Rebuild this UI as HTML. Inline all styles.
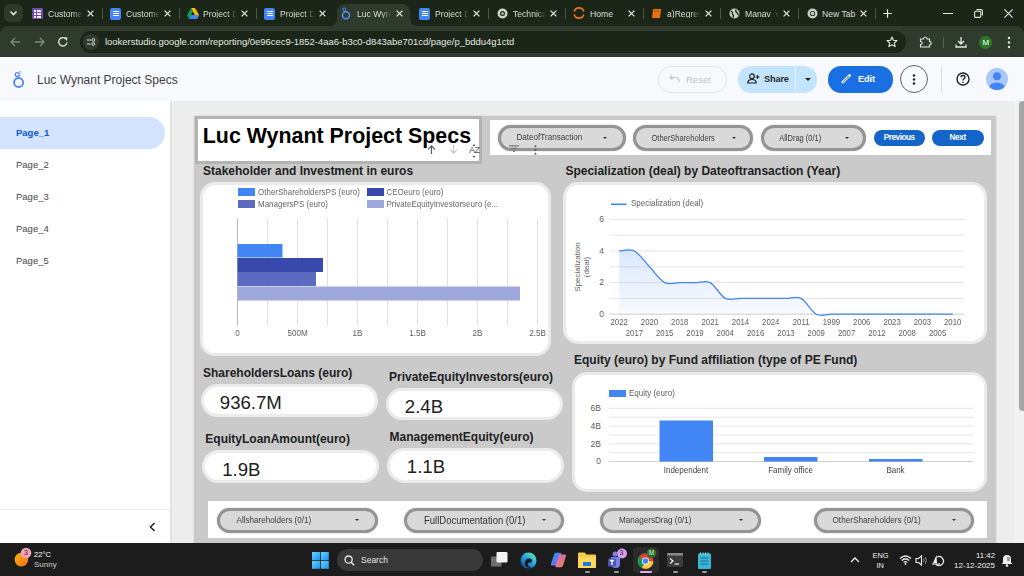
<!DOCTYPE html><html><head><meta charset="utf-8"><style>
*{margin:0;padding:0;box-sizing:border-box}
html,body{width:1024px;height:576px;overflow:hidden;background:#ececec;font-family:"Liberation Sans",sans-serif}
.a{position:absolute}
.t{position:absolute;white-space:nowrap;line-height:1}
.tabt{position:absolute;top:9.5px;font-size:8.6px;color:#cdd4c9;line-height:1;white-space:nowrap;overflow:hidden}
.sep{position:absolute;top:8px;width:1px;height:11px;background:#4b5849}
.pg{position:absolute;left:16px;font-size:9.5px;color:#474747;line-height:1}
.card{position:absolute;background:#fff;border:3px solid #ebebeb;border-radius:15px}
.stitle{position:absolute;font-size:12px;font-weight:bold;color:#212121;line-height:1;white-space:nowrap}
.pill{position:absolute;background:#fff;border:3px solid #ececec;border-radius:18px}
.val{position:absolute;font-size:18.6px;color:#212121;line-height:1;white-space:nowrap}
.fp{position:absolute;background:#d9d9d9;box-shadow:0 0 1.5px rgba(0,0,0,0.3);border:3px solid #949494;border-radius:14px}
.fpt{position:absolute;font-size:8px;color:#444;line-height:1;white-space:nowrap;transform:scaleY(1.12)}
.sy{transform:scaleY(1.12)}
.arr{position:absolute;width:0;height:0;border-left:2px solid transparent;border-right:2px solid transparent;border-top:2px solid #333}
svg{position:absolute;overflow:visible}
</style></head><body>
<div class="a" style="left:0;top:0;width:1024px;height:34px;background:#1b2619"></div>
<div class="a" style="left:4px;top:4px;width:19px;height:18px;background:#2d3a2c;border-radius:6px"></div>
<svg style="left:9px;top:9px" width="9" height="8" viewBox="0 0 9 8"><path d="M1.5 2.5 L4.5 5.5 L7.5 2.5" stroke="#e3e8df" stroke-width="1.6" fill="none"/></svg>
<div class="a" style="left:337px;top:4px;width:73px;height:23px;background:#2e3b2d;border-radius:8px 8px 0 0"></div>
<svg style="left:329px;top:18px" width="8" height="9" viewBox="0 0 8 9"><path d="M0 8 Q8 8 8 0 L8 9 L0 9Z" fill="#2e3b2d"/></svg>
<svg style="left:410px;top:18px" width="8" height="9" viewBox="0 0 8 9"><path d="M8 8 Q0 8 0 0 L0 9 L8 9Z" fill="#2e3b2d"/></svg>
<div class="a" style="left:32px;top:8px;width:11px;height:11px;background:#7248b9;border-radius:1px"></div>
<div class="a" style="left:34px;top:10px;width:1.5px;height:1.5px;background:#fff"></div><div class="a" style="left:36.5px;top:10px;width:4.5px;height:1.5px;background:#fff"></div>
<div class="a" style="left:34px;top:13px;width:1.5px;height:1.5px;background:#fff"></div><div class="a" style="left:36.5px;top:13px;width:4.5px;height:1.5px;background:#fff"></div>
<div class="a" style="left:34px;top:16px;width:1.5px;height:1.5px;background:#fff"></div><div class="a" style="left:36.5px;top:16px;width:4.5px;height:1.5px;background:#fff"></div>
<div class="tabt" style="left:48px;width:35px;color:#d9dfd5;-webkit-mask-image:linear-gradient(to right,#000 70%,transparent);">Custome</div>
<svg style="left:86.5px;top:10.0px" width="7" height="7" viewBox="0 0 7 7"><path d="M0.6 0.6 L6.4 6.4 M6.4 0.6 L0.6 6.4" stroke="#dfe5db" stroke-width="1.3"/></svg>
<div class="sep" style="left:102.3px"></div>
<div class="a" style="left:110px;top:8px;width:11px;height:12px;background:#4285f4;border-radius:2px"></div><div class="a" style="left:113px;top:11px;width:6px;height:1px;background:#fff"></div><div class="a" style="left:113px;top:13px;width:6px;height:1px;background:#fff"></div><div class="a" style="left:113px;top:15px;width:6px;height:1px;background:#fff"></div>
<div class="tabt" style="left:126px;width:34px;color:#d9dfd5;-webkit-mask-image:linear-gradient(to right,#000 70%,transparent);">Custome</div>
<svg style="left:163.5px;top:10.0px" width="7" height="7" viewBox="0 0 7 7"><path d="M0.6 0.6 L6.4 6.4 M6.4 0.6 L0.6 6.4" stroke="#dfe5db" stroke-width="1.3"/></svg>
<div class="sep" style="left:179.3px"></div>
<svg style="left:187px;top:8px" width="12" height="11" viewBox="0 0 12 11"><path d="M4 0 L8 0 L12 7 L10 11 Z" fill="#fbbc04"/><path d="M4 0 L0 7 L2 11 L6 3.5Z" fill="#0f9d58"/><path d="M2 11 L10 11 L12 7 L4 7Z" fill="#4285f4"/></svg>
<div class="tabt" style="left:203px;width:34px;color:#d9dfd5;-webkit-mask-image:linear-gradient(to right,#000 70%,transparent);">Project D</div>
<svg style="left:240.5px;top:10.0px" width="7" height="7" viewBox="0 0 7 7"><path d="M0.6 0.6 L6.4 6.4 M6.4 0.6 L0.6 6.4" stroke="#dfe5db" stroke-width="1.3"/></svg>
<div class="sep" style="left:256.3px"></div>
<div class="a" style="left:264px;top:8px;width:11px;height:12px;background:#4285f4;border-radius:2px"></div><div class="a" style="left:267px;top:11px;width:6px;height:1px;background:#fff"></div><div class="a" style="left:267px;top:13px;width:6px;height:1px;background:#fff"></div><div class="a" style="left:267px;top:15px;width:6px;height:1px;background:#fff"></div>
<div class="tabt" style="left:280px;width:35px;color:#d9dfd5;-webkit-mask-image:linear-gradient(to right,#000 70%,transparent);">Project D</div>
<svg style="left:318.5px;top:10.0px" width="7" height="7" viewBox="0 0 7 7"><path d="M0.6 0.6 L6.4 6.4 M6.4 0.6 L0.6 6.4" stroke="#dfe5db" stroke-width="1.3"/></svg>
<svg style="left:341px;top:7px" width="10" height="13" viewBox="0 0 10 13"><circle cx="5" cy="8.3" r="3.5" stroke="#4f8ff7" stroke-width="1.6" fill="none"/><circle cx="3.3" cy="2.6" r="1.6" stroke="#4f8ff7" stroke-width="1" fill="none"/></svg>
<div class="tabt" style="left:357px;width:35px;color:#d9dfd5;-webkit-mask-image:linear-gradient(to right,#000 70%,transparent);">Luc Wyn</div>
<svg style="left:395.5px;top:10.0px" width="7" height="7" viewBox="0 0 7 7"><path d="M0.6 0.6 L6.4 6.4 M6.4 0.6 L0.6 6.4" stroke="#dfe5db" stroke-width="1.3"/></svg>
<div class="a" style="left:419px;top:8px;width:11px;height:12px;background:#4285f4;border-radius:2px"></div><div class="a" style="left:422px;top:11px;width:6px;height:1px;background:#fff"></div><div class="a" style="left:422px;top:13px;width:6px;height:1px;background:#fff"></div><div class="a" style="left:422px;top:15px;width:6px;height:1px;background:#fff"></div>
<div class="tabt" style="left:435px;width:34px;color:#d9dfd5;-webkit-mask-image:linear-gradient(to right,#000 70%,transparent);">Project D</div>
<svg style="left:472.5px;top:10.0px" width="7" height="7" viewBox="0 0 7 7"><path d="M0.6 0.6 L6.4 6.4 M6.4 0.6 L0.6 6.4" stroke="#dfe5db" stroke-width="1.3"/></svg>
<div class="sep" style="left:488.3px"></div>
<svg style="left:497px;top:8px" width="11" height="11" viewBox="0 0 11 11"><circle cx="5.5" cy="5.5" r="5" fill="#cfd5cb"/><circle cx="5.5" cy="5.5" r="2.5" fill="#1b2619"/><circle cx="5.5" cy="5.5" r="1.2" fill="#cfd5cb"/></svg>
<div class="tabt" style="left:513px;width:33px;color:#d9dfd5;-webkit-mask-image:linear-gradient(to right,#000 70%,transparent);">Technica</div>
<svg style="left:549.5px;top:10.0px" width="7" height="7" viewBox="0 0 7 7"><path d="M0.6 0.6 L6.4 6.4 M6.4 0.6 L0.6 6.4" stroke="#dfe5db" stroke-width="1.3"/></svg>
<div class="sep" style="left:565.3px"></div>
<svg style="left:573px;top:7px" width="12" height="12" viewBox="0 0 12 12"><path d="M1.2 4.5 A5 5 0 0 1 10.8 4.5" stroke="#e8731c" stroke-width="1.6" fill="none"/><path d="M1.2 7.5 A5 5 0 0 0 10.8 7.5" stroke="#e8731c" stroke-width="1.6" fill="none"/></svg>
<div class="tabt" style="left:590px;width:34px;color:#d9dfd5;">Home</div>
<svg style="left:627.5px;top:10.0px" width="7" height="7" viewBox="0 0 7 7"><path d="M0.6 0.6 L6.4 6.4 M6.4 0.6 L0.6 6.4" stroke="#dfe5db" stroke-width="1.3"/></svg>
<div class="sep" style="left:643.3px"></div>
<svg style="left:651px;top:8px" width="11" height="11" viewBox="0 0 11 11"><path d="M2 1 L10 1 L9 10 L1 10Z" fill="#e8730f"/><path d="M3 3 L8 3" stroke="#7a3a00" stroke-width="0.8"/></svg>
<div class="tabt" style="left:667px;width:34px;color:#d9dfd5;-webkit-mask-image:linear-gradient(to right,#000 70%,transparent);">a)Regres</div>
<svg style="left:704.5px;top:10.0px" width="7" height="7" viewBox="0 0 7 7"><path d="M0.6 0.6 L6.4 6.4 M6.4 0.6 L0.6 6.4" stroke="#dfe5db" stroke-width="1.3"/></svg>
<div class="sep" style="left:720.3px"></div>
<svg style="left:729px;top:8px" width="11" height="11" viewBox="0 0 11 11"><circle cx="5.5" cy="5.5" r="5" fill="#c8cec4"/><path d="M2 3 Q4 4 3.5 6 Q5 7 4 9.5 M7 1.5 Q6 4 8.5 5 Q9 7 10 7" stroke="#1b2619" stroke-width="1.3" fill="none"/></svg>
<div class="tabt" style="left:745px;width:34px;color:#d9dfd5;-webkit-mask-image:linear-gradient(to right,#000 70%,transparent);">Manav_v</div>
<svg style="left:782.5px;top:10.0px" width="7" height="7" viewBox="0 0 7 7"><path d="M0.6 0.6 L6.4 6.4 M6.4 0.6 L0.6 6.4" stroke="#dfe5db" stroke-width="1.3"/></svg>
<div class="sep" style="left:798.3px"></div>
<svg style="left:807px;top:8px" width="11" height="11" viewBox="0 0 11 11"><circle cx="5.5" cy="5.5" r="5" fill="#c8cec4"/><circle cx="5.5" cy="5.5" r="2.6" fill="#1b2619"/><circle cx="5.5" cy="5.5" r="1.8" fill="#c8cec4"/></svg>
<div class="tabt" style="left:822px;width:34px;color:#d9dfd5;">New Tab</div>
<svg style="left:859.5px;top:10.0px" width="7" height="7" viewBox="0 0 7 7"><path d="M0.6 0.6 L6.4 6.4 M6.4 0.6 L0.6 6.4" stroke="#dfe5db" stroke-width="1.3"/></svg>
<div class="sep" style="left:875.3px"></div>
<svg style="left:883px;top:9px" width="9" height="9" viewBox="0 0 9 9"><path d="M4.5 0.3 V8.7 M0.3 4.5 H8.7" stroke="#e3e8df" stroke-width="1.2"/></svg>
<div class="a" style="left:943px;top:13px;width:10px;height:1px;background:#e3e8df"></div>
<svg style="left:973.5px;top:9px" width="9" height="9" viewBox="0 0 9 9"><rect x="0.6" y="2.2" width="6.2" height="6.2" rx="1.2" stroke="#e3e8df" stroke-width="1.1" fill="none"/><path d="M2.5 0.6 H7 Q8.4 0.6 8.4 2 V6.5" stroke="#e3e8df" stroke-width="1.1" fill="none"/></svg>
<svg style="left:1004px;top:9px" width="9" height="9" viewBox="0 0 9 9"><path d="M0.4 0.4 L8.6 8.6 M8.6 0.4 L0.4 8.6" stroke="#e3e8df" stroke-width="1.1"/></svg>
<div class="a" style="left:0;top:26px;width:1024px;height:31px;background:#2e3b2d;border-radius:8px 8px 0 0"></div>
<div class="a" style="left:337px;top:20px;width:73px;height:8px;background:#2e3b2d"></div>
<svg style="left:10px;top:37px" width="11" height="10" viewBox="0 0 11 10"><path d="M10 5 H1.5 M5 1 L1 5 L5 9" stroke="#7f8c7c" stroke-width="1.3" fill="none"/></svg>
<svg style="left:34px;top:37px" width="11" height="10" viewBox="0 0 11 10"><path d="M1 5 H9.5 M6 1 L10 5 L6 9" stroke="#7f8c7c" stroke-width="1.3" fill="none"/></svg>
<svg style="left:57px;top:36px" width="12" height="12" viewBox="0 0 12 12"><path d="M10 6.5 A4.2 4.2 0 1 1 8.5 2.6" stroke="#d9dfd5" stroke-width="1.4" fill="none"/><path d="M6.5 1.5 L10.3 1.3 L10 5Z" fill="#d9dfd5"/></svg>
<div class="a" style="left:80px;top:31px;width:826px;height:22px;background:#1b2619;border-radius:11px"></div>
<div class="a" style="left:83px;top:34px;width:16px;height:16px;background:#2e3b2d;border-radius:8px"></div>
<svg style="left:86px;top:37px" width="10" height="10" viewBox="0 0 10 10"><path d="M1 3 H5 M1 7 H4.5" stroke="#d9dfd5" stroke-width="1.1"/><circle cx="7.3" cy="3" r="1.4" stroke="#d9dfd5" stroke-width="1" fill="none"/><circle cx="7.3" cy="7" r="1.4" stroke="#d9dfd5" stroke-width="1" fill="none"/></svg>
<div class="t" style="left:105px;top:37px;font-size:9.45px;color:#e6e9e3">lookerstudio.google.com/reporting/0e96cec9-1852-4aa6-b3c0-d843abe701cd/page/p_bddu4g1ctd</div>
<svg style="left:886px;top:36px" width="12" height="12" viewBox="0 0 12 12"><path d="M6 1 L7.4 4.3 L11 4.6 L8.3 7 L9.1 10.6 L6 8.7 L2.9 10.6 L3.7 7 L1 4.6 L4.6 4.3Z" stroke="#e3e8df" stroke-width="1.1" fill="none" stroke-linejoin="round"/></svg>
<svg style="left:919px;top:36px" width="13" height="12" viewBox="0 0 13 12"><path d="M1.5 3 H4.5 Q4.5 1 6.3 1 Q8 1 8 3 H10.5 V5.5 Q12.3 5.5 12.3 7.2 Q12.3 9 10.5 9 V11 H1.5 V8.5 Q3.2 8.5 3.2 7 Q3.2 5.5 1.5 5.5Z" stroke="#e3e8df" stroke-width="1.1" fill="none"/></svg>
<div class="a" style="left:943px;top:37px;width:1px;height:11px;background:#56624f"></div>
<svg style="left:955px;top:36px" width="12" height="12" viewBox="0 0 12 12"><path d="M6 1 V8 M3 5 L6 8 L9 5 M1 8.5 V11 H11 V8.5" stroke="#e3e8df" stroke-width="1.3" fill="none"/></svg>
<div class="a" style="left:979px;top:36px;width:13px;height:13px;background:#2b7a2a;border-radius:7px"></div>
<div class="t" style="left:982.5px;top:39px;font-size:8px;color:#fff">M</div>
<svg style="left:1007px;top:36px" width="4" height="13" viewBox="0 0 4 13"><circle cx="2" cy="2" r="1.2" fill="#e3e8df"/><circle cx="2" cy="6.5" r="1.2" fill="#e3e8df"/><circle cx="2" cy="11" r="1.2" fill="#e3e8df"/></svg>
<div class="a" style="left:0;top:57px;width:1024px;height:44px;background:#f8f9fc"></div>
<svg style="left:12px;top:70px" width="14" height="19" viewBox="0 0 14 19"><circle cx="6.6" cy="12.5" r="4.5" stroke="#4d8af0" stroke-width="1.9" fill="none"/><circle cx="5.2" cy="4.6" r="2" stroke="#4d8af0" stroke-width="1.3" fill="none"/><circle cx="7.8" cy="2.4" r="1.1" stroke="#8fb6f5" stroke-width="0.9" fill="none"/></svg>
<div class="t" style="left:37px;top:74px;font-size:12px;color:#3c4043">Luc Wynant Project Specs</div>
<div class="a" style="left:658px;top:66.3px;width:69px;height:26.3px;border:1px solid #e3e4e8;border-radius:13px"></div>
<svg style="left:669px;top:74px" width="11" height="9" viewBox="0 0 11 9"><path d="M3 1 L1 3.5 L3.5 5.5 M1.3 3.5 H6.5 Q10 3.5 10 7 V8" stroke="#c1c4ca" stroke-width="1.2" fill="none"/></svg>
<div class="t" style="left:686px;top:75.2px;font-size:9.5px;color:#c1c4ca">Reset</div>
<div class="a" style="left:738px;top:66.3px;width:79px;height:26.3px;background:#c2e5fd;border-radius:13px"></div>
<div class="a" style="left:795px;top:66px;width:1px;height:26px;background:#e8f4fd"></div>
<svg style="left:747px;top:73px" width="13" height="11" viewBox="0 0 13 11"><circle cx="5" cy="3.2" r="2.3" stroke="#1f1f1f" stroke-width="1.2" fill="none"/><path d="M0.8 10 Q0.8 6.5 5 6.5 Q9.2 6.5 9.2 10Z" stroke="#1f1f1f" stroke-width="1.2" fill="none"/><path d="M10.5 2 V6 M8.5 4 H12.5" stroke="#1f1f1f" stroke-width="1.2"/></svg>
<div class="t" style="left:764px;top:75.2px;font-size:9.2px;color:#2a2a2a;font-weight:bold;letter-spacing:-0.15px">Share</div>
<div class="arr" style="left:804.5px;top:78px;border-left-width:3px;border-right-width:3px;border-top-width:3px;border-top-color:#1f1f1f"></div>
<div class="a" style="left:828px;top:66.3px;width:65px;height:26.3px;background:#1a6fe3;border-radius:13px"></div>
<svg style="left:841px;top:73px" width="11" height="11" viewBox="0 0 11 11"><path d="M1.8 9.2 L8.6 2.4" stroke="#fff" stroke-width="2.6" stroke-linecap="round"/><path d="M2.4 8.6 L7.6 3.4" stroke="#1a6fe3" stroke-width="0.8" stroke-linecap="round"/></svg>
<div class="t" style="left:858px;top:75.2px;font-size:9.2px;color:#fff;font-weight:bold;letter-spacing:-0.1px">Edit</div>
<div class="a" style="left:900px;top:65px;width:28px;height:28px;border:1px solid #5f6368;border-radius:14px"></div>
<svg style="left:912px;top:74px" width="4" height="11" viewBox="0 0 4 11"><circle cx="2" cy="1.5" r="1.2" fill="#1f1f1f"/><circle cx="2" cy="5.5" r="1.2" fill="#1f1f1f"/><circle cx="2" cy="9.5" r="1.2" fill="#1f1f1f"/></svg>
<div class="a" style="left:941px;top:66px;width:1px;height:27px;background:#dadce0"></div>
<svg style="left:956px;top:72px" width="14" height="14" viewBox="0 0 14 14"><circle cx="7" cy="7" r="6" stroke="#1f1f1f" stroke-width="1.4" fill="none"/><path d="M5 5.3 Q5 3.5 7 3.5 Q9 3.5 9 5.2 Q9 6.3 7.8 6.9 Q7 7.3 7 8.4" stroke="#1f1f1f" stroke-width="1.3" fill="none"/><circle cx="7" cy="10.3" r="0.8" fill="#1f1f1f"/></svg>
<svg style="left:986px;top:68px" width="22" height="22" viewBox="0 0 22 22"><defs><clipPath id="av"><circle cx="11" cy="11" r="11"/></clipPath></defs><circle cx="11" cy="11" r="11" fill="#a8c7fa"/><g clip-path="url(#av)"><circle cx="11" cy="8.3" r="4" fill="#4285f4"/><ellipse cx="11" cy="20" rx="8" ry="5.5" fill="#4285f4"/></g></svg>
<div class="a" style="left:0;top:101px;width:170px;height:442px;background:#fff"></div>
<div class="a" style="left:-20px;top:117px;width:185px;height:32px;background:#d3e3fd;border-radius:16px"></div>
<div class="pg" style="top:128px;color:#0b57d0;font-weight:bold">Page_1</div>
<div class="pg" style="top:160px">Page_2</div>
<div class="pg" style="top:192px">Page_3</div>
<div class="pg" style="top:224px">Page_4</div>
<div class="pg" style="top:256px">Page_5</div>
<div class="a" style="left:0;top:509px;width:170px;height:1px;background:#e8e8e8"></div>
<svg style="left:149px;top:522px" width="7" height="10" viewBox="0 0 7 10"><path d="M5.5 1 L1.5 5 L5.5 9" stroke="#1f1f1f" stroke-width="1.5" fill="none"/></svg>
<div class="a" style="left:170px;top:101px;width:849px;height:442px;background:#ededed"></div><div class="a" style="left:170px;top:101px;width:1.5px;height:442px;background:#e2e2e2"></div>
<div class="a" style="left:1014px;top:101px;width:10px;height:442px;background:#f1f1f1"></div>
<div class="a" style="left:1019px;top:101px;width:8px;height:310px;background:#a6a6a6;border-radius:4px"></div>
<div class="a" style="left:194px;top:116px;width:801.5px;height:427px;background:#cacaca;box-shadow:0 0 1.5px rgba(0,0,0,0.15)"></div>
<div class="a" style="left:195px;top:116px;width:287px;height:48px;background:#fff;border:3px solid #b3b3b3"></div>
<div class="t" style="left:202.8px;top:126px;font-size:21.4px;font-weight:bold;color:#000">Luc Wynant Project Specs</div>
<svg style="left:427px;top:145px" width="9" height="9" viewBox="0 0 9 9"><path d="M4.5 9 V1 M1 4.3 L4.5 0.8 L8 4.3" stroke="#555" stroke-width="1.1" fill="none"/></svg>
<svg style="left:449px;top:145px" width="9" height="9" viewBox="0 0 9 9"><path d="M4.5 0 V8 M1 4.7 L4.5 8.2 L8 4.7" stroke="#c4c4c4" stroke-width="1.1" fill="none"/></svg>
<div class="t" style="left:469px;top:146.3px;font-size:9px;color:#555;letter-spacing:-0.6px">AZ</div>
<svg style="left:471.5px;top:143.5px" width="4" height="14" viewBox="0 0 4 14"><path d="M2 0 L3.5 2 H0.5Z M2 14 L3.5 12 H0.5Z" fill="#555"/></svg>
<div class="a" style="left:490px;top:120px;width:501px;height:35px;background:#fff"></div>
<div class="fp" style="left:497.5px;top:124.8px;width:128.0px;height:25.89999999999999px;border-radius:12.949999999999996px"></div>
<div class="fpt" style="left:516.5px;top:134.30px;font-size:8.1px;color:#3c3c3c">DateofTransaction</div>
<div class="arr" style="left:603px;top:136.75px"></div>
<div class="fp" style="left:632.5px;top:124.8px;width:120.79999999999995px;height:25.89999999999999px;border-radius:12.949999999999996px"></div>
<div class="fpt" style="left:651.5px;top:134.60px;font-size:7.5px;color:#3c3c3c">OtherShareholders</div>
<div class="arr" style="left:731.5px;top:136.75px"></div>
<div class="fp" style="left:760.5px;top:124.8px;width:105.79999999999995px;height:25.89999999999999px;border-radius:12.949999999999996px"></div>
<div class="fpt" style="left:779.2px;top:134.60px;font-size:7.5px;color:#3c3c3c">AllDrag (0/1)</div>
<div class="arr" style="left:844.5px;top:136.75px"></div>
<svg style="left:509px;top:145px" width="10" height="8" viewBox="0 0 10 8"><path d="M0 0.8 H10 M2 3.5 H8 M4 6.3 H6" stroke="#777" stroke-width="1.3"/></svg>
<svg style="left:534px;top:145px" width="3" height="10" viewBox="0 0 3 10"><circle cx="1.5" cy="1.3" r="1" fill="#555"/><circle cx="1.5" cy="5" r="1" fill="#555"/><circle cx="1.5" cy="8.7" r="1" fill="#555"/></svg>
<div class="a" style="left:873.5px;top:129.7px;width:51px;height:16.3px;background:#1565c8;border-radius:8px"></div>
<div class="t" style="left:883.7px;top:134.3px;font-size:8.2px;font-weight:bold;color:#fff;letter-spacing:-0.45px">Previous</div>
<div class="a" style="left:932px;top:129.7px;width:51.5px;height:16.3px;background:#1565c8;border-radius:8px"></div>
<div class="t" style="left:949.5px;top:134.3px;font-size:8.2px;font-weight:bold;color:#fff;letter-spacing:-0.3px">Next</div>
<div class="stitle" style="left:203px;top:164.5px">Stakeholder and Investment in euros</div>
<div class="stitle" style="left:565.4px;top:164.5px">Specialization (deal) by Dateoftransaction (Year)</div>
<div class="stitle" style="left:574px;top:354px">Equity (euro) by Fund affiliation (type of PE Fund)</div>
<div class="card" style="left:200px;top:182px;width:351px;height:173.5px"></div>
<div class="card" style="left:563px;top:182px;width:424px;height:161.5px"></div>
<div class="card" style="left:572px;top:372px;width:415px;height:119.5px"></div>
<div class="stitle" style="left:203px;top:366.5px">ShareholdersLoans (euro)</div>
<div class="pill" style="left:201px;top:384px;width:177px;height:33px;border-radius:16.5px"></div>
<div class="val" style="left:219.8px;top:394.3px">936.7M</div>
<div class="stitle" style="left:389px;top:370.5px">PrivateEquityInvestors(euro)</div>
<div class="pill" style="left:386px;top:388px;width:177px;height:32px;border-radius:16.0px"></div>
<div class="val" style="left:404.8px;top:397.8px">2.4B</div>
<div class="stitle" style="left:205.3px;top:432.5px">EquityLoanAmount(euro)</div>
<div class="pill" style="left:202px;top:450px;width:177px;height:33px;border-radius:16.5px"></div>
<div class="val" style="left:222.2px;top:460.7px">1.9B</div>
<div class="stitle" style="left:389.5px;top:430.5px">ManagementEquity(euro)</div>
<div class="pill" style="left:386.8px;top:447.5px;width:177.2px;height:35.5px;border-radius:17.75px"></div>
<div class="val" style="left:406.8px;top:457.8px">1.1B</div>
<div class="a" style="left:208px;top:501px;width:779px;height:37px;background:#fff"></div>
<div class="fp" style="left:217.3px;top:507.6px;width:160.7px;height:25.399999999999977px;border-radius:12.699999999999989px"></div>
<div class="fpt" style="left:236.5px;top:516.85px;font-size:8.1px;color:#3c3c3c">Allshareholders (0/1)</div>
<div class="arr" style="left:355px;top:519.3px"></div>
<div class="fp" style="left:403.6px;top:507.6px;width:160.19999999999993px;height:25.399999999999977px;border-radius:12.699999999999989px"></div>
<div class="fpt" style="left:424px;top:516.15px;font-size:9.5px;color:#333">FullDocumentation (0/1)</div>
<div class="arr" style="left:541.5px;top:519.3px"></div>
<div class="fp" style="left:600.2px;top:507.6px;width:160.79999999999995px;height:25.399999999999977px;border-radius:12.699999999999989px"></div>
<div class="fpt" style="left:619px;top:516.85px;font-size:8.1px;color:#3c3c3c">ManagersDrag (0/1)</div>
<div class="arr" style="left:738.5px;top:519.3px"></div>
<div class="fp" style="left:813.5px;top:507.6px;width:160.79999999999995px;height:25.399999999999977px;border-radius:12.699999999999989px"></div>
<div class="fpt" style="left:832.5px;top:516.80px;font-size:8.2px;color:#3c3c3c">OtherShareholders (0/1)</div>
<div class="arr" style="left:952px;top:519.3px"></div>
<div class="a" style="left:238px;top:188px;width:17px;height:8px;background:#4285f4"></div>
<div class="t sy" style="left:258px;top:188.8px;font-size:8px;color:#686868">OtherShareholdersPS (euro)</div>
<div class="a" style="left:366.5px;top:188px;width:17px;height:8px;background:#3949ab"></div>
<div class="t sy" style="left:386.5px;top:188.8px;font-size:8px;color:#686868">CEOeuro (euro)</div>
<div class="a" style="left:238px;top:200px;width:17px;height:8px;background:#5c6bc0"></div>
<div class="t sy" style="left:258px;top:200.8px;font-size:8px;color:#686868">ManagersPS (euro)</div>
<div class="a" style="left:366.5px;top:200px;width:17px;height:8px;background:#9fa8da"></div>
<div class="t sy" style="left:386.5px;top:200.8px;font-size:8px;color:#686868">PrivateEquityInvestorseuro (e...</div>
<svg style="left:0;top:0" width="1024" height="576"><line x1="237.5" y1="219" x2="237.5" y2="326" stroke="#b8b8b8" stroke-width="1"/><line x1="267.5" y1="219" x2="267.5" y2="326" stroke="#e2e2e2" stroke-width="1"/><line x1="297.5" y1="219" x2="297.5" y2="326" stroke="#e2e2e2" stroke-width="1"/><line x1="327.5" y1="219" x2="327.5" y2="326" stroke="#e2e2e2" stroke-width="1"/><line x1="357.5" y1="219" x2="357.5" y2="326" stroke="#e2e2e2" stroke-width="1"/><line x1="387.5" y1="219" x2="387.5" y2="326" stroke="#e2e2e2" stroke-width="1"/><line x1="417.5" y1="219" x2="417.5" y2="326" stroke="#e2e2e2" stroke-width="1"/><line x1="447.5" y1="219" x2="447.5" y2="326" stroke="#e2e2e2" stroke-width="1"/><line x1="477.5" y1="219" x2="477.5" y2="326" stroke="#e2e2e2" stroke-width="1"/><line x1="507.5" y1="219" x2="507.5" y2="326" stroke="#e2e2e2" stroke-width="1"/><line x1="537.5" y1="219" x2="537.5" y2="326" stroke="#e2e2e2" stroke-width="1"/><rect x="237.5" y="244" width="45.0" height="13.5" fill="#4285f4"/><rect x="237.5" y="258" width="85.5" height="14" fill="#3949ab"/><rect x="237.5" y="272" width="78.5" height="14" fill="#5c6bc0"/><rect x="237.5" y="286.5" width="282.5" height="14.0" fill="#9fa8da"/></svg>
<div class="t sy" style="left:187.5px;width:100px;text-align:center;top:329.8px;font-size:8.1px;color:#616161">0</div>
<div class="t sy" style="left:247.5px;width:100px;text-align:center;top:329.8px;font-size:8.1px;color:#616161">500M</div>
<div class="t sy" style="left:307.5px;width:100px;text-align:center;top:329.8px;font-size:8.1px;color:#616161">1B</div>
<div class="t sy" style="left:367.5px;width:100px;text-align:center;top:329.8px;font-size:8.1px;color:#616161">1.5B</div>
<div class="t sy" style="left:427.5px;width:100px;text-align:center;top:329.8px;font-size:8.1px;color:#616161">2B</div>
<div class="t sy" style="left:487.5px;width:100px;text-align:center;top:329.8px;font-size:8.1px;color:#616161">2.5B</div>
<svg style="left:0;top:0" width="1024" height="576"><line x1="611" y1="204.3" x2="626.5" y2="204.3" stroke="#4285f4" stroke-width="1.6"/></svg>
<div class="t sy" style="left:631px;top:200px;font-size:8px;color:#616161">Specialization (deal)</div>
<svg style="left:0;top:0" width="1024" height="576"><defs><linearGradient id="lg" x1="0" y1="0" x2="0" y2="1"><stop offset="0" stop-color="#4285f4" stop-opacity="0.2"/><stop offset="1" stop-color="#4285f4" stop-opacity="0.03"/></linearGradient></defs><line x1="610" y1="314.2" x2="964" y2="314.2" stroke="#cfcfcf" stroke-width="1"/><line x1="610" y1="298.4" x2="964" y2="298.4" stroke="#e5e5e5" stroke-width="1"/><line x1="610" y1="282.6" x2="964" y2="282.6" stroke="#e5e5e5" stroke-width="1"/><line x1="610" y1="266.8" x2="964" y2="266.8" stroke="#e5e5e5" stroke-width="1"/><line x1="610" y1="251.0" x2="964" y2="251.0" stroke="#e5e5e5" stroke-width="1"/><line x1="610" y1="235.2" x2="964" y2="235.2" stroke="#e5e5e5" stroke-width="1"/><line x1="610" y1="219.4" x2="964" y2="219.4" stroke="#e5e5e5" stroke-width="1"/><path d="M619.20,251.00 C621.73,251.00 629.31,248.37 634.36,251.00 C639.41,253.63 644.47,261.53 649.52,266.80 C654.57,272.07 659.63,279.97 664.68,282.60 C669.73,285.23 674.79,282.60 679.84,282.60 C684.89,282.60 689.95,282.60 695.00,282.60 C700.05,282.60 705.11,279.97 710.16,282.60 C715.21,285.23 720.27,295.77 725.32,298.40 C730.37,301.03 735.43,298.40 740.48,298.40 C745.53,298.40 750.59,298.40 755.64,298.40 C760.69,298.40 765.75,298.40 770.80,298.40 C775.85,298.40 780.91,298.40 785.96,298.40 C791.01,298.40 796.07,295.77 801.12,298.40 C806.17,301.03 811.23,311.57 816.28,314.20 C821.33,316.83 826.39,314.20 831.44,314.20 C836.49,314.20 841.55,314.20 846.60,314.20 C851.65,314.20 856.71,314.20 861.76,314.20 C866.81,314.20 871.87,314.20 876.92,314.20 C881.97,314.20 887.03,314.20 892.08,314.20 C897.13,314.20 902.19,314.20 907.24,314.20 C912.29,314.20 917.35,314.20 922.40,314.20 C927.45,314.20 932.51,314.20 937.56,314.20 C942.61,314.20 950.19,314.20 952.72,314.20 L952.72,314.2 L619.20,314.2 Z" fill="url(#lg)"/><path d="M619.20,251.00 C621.73,251.00 629.31,248.37 634.36,251.00 C639.41,253.63 644.47,261.53 649.52,266.80 C654.57,272.07 659.63,279.97 664.68,282.60 C669.73,285.23 674.79,282.60 679.84,282.60 C684.89,282.60 689.95,282.60 695.00,282.60 C700.05,282.60 705.11,279.97 710.16,282.60 C715.21,285.23 720.27,295.77 725.32,298.40 C730.37,301.03 735.43,298.40 740.48,298.40 C745.53,298.40 750.59,298.40 755.64,298.40 C760.69,298.40 765.75,298.40 770.80,298.40 C775.85,298.40 780.91,298.40 785.96,298.40 C791.01,298.40 796.07,295.77 801.12,298.40 C806.17,301.03 811.23,311.57 816.28,314.20 C821.33,316.83 826.39,314.20 831.44,314.20 C836.49,314.20 841.55,314.20 846.60,314.20 C851.65,314.20 856.71,314.20 861.76,314.20 C866.81,314.20 871.87,314.20 876.92,314.20 C881.97,314.20 887.03,314.20 892.08,314.20 C897.13,314.20 902.19,314.20 907.24,314.20 C912.29,314.20 917.35,314.20 922.40,314.20 C927.45,314.20 932.51,314.20 937.56,314.20 C942.61,314.20 950.19,314.20 952.72,314.20" stroke="#4285f4" stroke-width="1.25" fill="none"/></svg>
<div class="t" style="left:584px;width:20px;text-align:right;top:309.7px;font-size:8.5px;color:#616161">0</div>
<div class="t" style="left:584px;width:20px;text-align:right;top:278.1px;font-size:8.5px;color:#616161">2</div>
<div class="t" style="left:584px;width:20px;text-align:right;top:246.5px;font-size:8.5px;color:#616161">4</div>
<div class="t" style="left:584px;width:20px;text-align:right;top:214.9px;font-size:8.5px;color:#616161">6</div>
<div class="t sy" style="left:599.2px;width:40px;text-align:center;top:318.5px;font-size:7.8px;color:#616161">2022</div>
<div class="t sy" style="left:614.4px;width:40px;text-align:center;top:329.5px;font-size:7.8px;color:#616161">2017</div>
<div class="t sy" style="left:629.5px;width:40px;text-align:center;top:318.5px;font-size:7.8px;color:#616161">2020</div>
<div class="t sy" style="left:644.7px;width:40px;text-align:center;top:329.5px;font-size:7.8px;color:#616161">2015</div>
<div class="t sy" style="left:659.8px;width:40px;text-align:center;top:318.5px;font-size:7.8px;color:#616161">2018</div>
<div class="t sy" style="left:675.0px;width:40px;text-align:center;top:329.5px;font-size:7.8px;color:#616161">2019</div>
<div class="t sy" style="left:690.2px;width:40px;text-align:center;top:318.5px;font-size:7.8px;color:#616161">2021</div>
<div class="t sy" style="left:705.3px;width:40px;text-align:center;top:329.5px;font-size:7.8px;color:#616161">2004</div>
<div class="t sy" style="left:720.5px;width:40px;text-align:center;top:318.5px;font-size:7.8px;color:#616161">2014</div>
<div class="t sy" style="left:735.6px;width:40px;text-align:center;top:329.5px;font-size:7.8px;color:#616161">2016</div>
<div class="t sy" style="left:750.8px;width:40px;text-align:center;top:318.5px;font-size:7.8px;color:#616161">2024</div>
<div class="t sy" style="left:766.0px;width:40px;text-align:center;top:329.5px;font-size:7.8px;color:#616161">2013</div>
<div class="t sy" style="left:781.1px;width:40px;text-align:center;top:318.5px;font-size:7.8px;color:#616161">2011</div>
<div class="t sy" style="left:796.3px;width:40px;text-align:center;top:329.5px;font-size:7.8px;color:#616161">2009</div>
<div class="t sy" style="left:811.4px;width:40px;text-align:center;top:318.5px;font-size:7.8px;color:#616161">1999</div>
<div class="t sy" style="left:826.6px;width:40px;text-align:center;top:329.5px;font-size:7.8px;color:#616161">2007</div>
<div class="t sy" style="left:841.8px;width:40px;text-align:center;top:318.5px;font-size:7.8px;color:#616161">2006</div>
<div class="t sy" style="left:856.9px;width:40px;text-align:center;top:329.5px;font-size:7.8px;color:#616161">2012</div>
<div class="t sy" style="left:872.1px;width:40px;text-align:center;top:318.5px;font-size:7.8px;color:#616161">2023</div>
<div class="t sy" style="left:887.2px;width:40px;text-align:center;top:329.5px;font-size:7.8px;color:#616161">2008</div>
<div class="t sy" style="left:902.4px;width:40px;text-align:center;top:318.5px;font-size:7.8px;color:#616161">2003</div>
<div class="t sy" style="left:917.6px;width:40px;text-align:center;top:329.5px;font-size:7.8px;color:#616161">2005</div>
<div class="t sy" style="left:932.7px;width:40px;text-align:center;top:318.5px;font-size:7.8px;color:#616161">2010</div>
<div class="t" style="left:547px;top:263px;width:60px;text-align:center;font-size:8px;color:#616161;transform:rotate(-90deg);transform-origin:30px 4px;line-height:9px">Specialization<br>(deal)</div>
<div class="a" style="left:609px;top:390px;width:17px;height:7px;background:#4285f4"></div>
<div class="t sy" style="left:629px;top:389.5px;font-size:8px;color:#616161">Equity (euro)</div>
<svg style="left:0;top:0" width="1024" height="576"><line x1="608.7" y1="461.6" x2="973.6" y2="461.6" stroke="#cfcfcf" stroke-width="1"/><line x1="608.7" y1="452.7" x2="973.6" y2="452.7" stroke="#e5e5e5" stroke-width="1"/><line x1="608.7" y1="443.8" x2="973.6" y2="443.8" stroke="#e5e5e5" stroke-width="1"/><line x1="608.7" y1="435.0" x2="973.6" y2="435.0" stroke="#e5e5e5" stroke-width="1"/><line x1="608.7" y1="426.1" x2="973.6" y2="426.1" stroke="#e5e5e5" stroke-width="1"/><line x1="608.7" y1="417.2" x2="973.6" y2="417.2" stroke="#e5e5e5" stroke-width="1"/><line x1="608.7" y1="408.3" x2="973.6" y2="408.3" stroke="#e5e5e5" stroke-width="1"/><rect x="659.5" y="420.5" width="53.5" height="41.10000000000002" fill="#4285f4"/><rect x="764" y="457" width="53.5" height="4.600000000000023" fill="#4285f4"/><rect x="869" y="459" width="53.5" height="2.6000000000000227" fill="#4285f4"/></svg>
<div class="t" style="left:571px;width:30px;text-align:right;top:457.3px;font-size:8.5px;color:#616161">0</div>
<div class="t" style="left:571px;width:30px;text-align:right;top:439.5px;font-size:8.5px;color:#616161">2B</div>
<div class="t" style="left:571px;width:30px;text-align:right;top:421.8px;font-size:8.5px;color:#616161">4B</div>
<div class="t" style="left:571px;width:30px;text-align:right;top:404.0px;font-size:8.5px;color:#616161">6B</div>
<div class="t sy" style="left:646px;width:80px;text-align:center;top:466.8px;font-size:8px;color:#424242">Independent</div>
<div class="t sy" style="left:750.6px;width:80px;text-align:center;top:466.8px;font-size:8px;color:#424242">Family office</div>
<div class="t sy" style="left:855.5px;width:80px;text-align:center;top:466.8px;font-size:8px;color:#424242">Bank</div>
<div class="a" style="left:0;top:543px;width:1024px;height:33px;background:#1c1c1c"></div>
<svg style="left:0;top:543px" width="1024" height="33"><defs><linearGradient id="sun" x1="0" y1="0" x2="1" y2="1"><stop offset="0" stop-color="#f7b917"/><stop offset="1" stop-color="#f26a0f"/></linearGradient></defs><circle cx="21.4" cy="16.6" r="6.8" fill="url(#sun)"/><circle cx="26" cy="10" r="5.3" fill="#f5a3b8"/></svg>
<div class="t" style="left:23.8px;top:548.5px;font-size:7.5px;color:#5a2030">3</div>
<div class="t" style="left:34px;top:551px;font-size:7.6px;color:#fff">22°C</div>
<div class="t" style="left:34px;top:561px;font-size:8px;color:#cfcfcf">Sunny</div>
<svg style="left:311.5px;top:552px" width="17" height="17" viewBox="0 0 17 17"><defs><linearGradient id="wl" x1="0" y1="0" x2="1" y2="1"><stop offset="0" stop-color="#5fd3ff"/><stop offset="1" stop-color="#1e90f0"/></linearGradient></defs><rect x="0" y="0" width="8" height="8" fill="url(#wl)"/><rect x="8.8" y="0" width="8" height="8" fill="url(#wl)"/><rect x="0" y="8.8" width="8" height="8" fill="url(#wl)"/><rect x="8.8" y="8.8" width="8" height="8" fill="url(#wl)"/></svg>
<div class="a" style="left:336.5px;top:549px;width:146.5px;height:22px;background:#383838;border-radius:11px"></div>
<svg style="left:344px;top:555px" width="11" height="11" viewBox="0 0 11 11"><circle cx="4.6" cy="4.6" r="3.6" stroke="#e8e8e8" stroke-width="1.3" fill="none"/><path d="M7.2 7.2 L10.2 10.2" stroke="#e8e8e8" stroke-width="1.4"/></svg>
<div class="t" style="left:361px;top:555.5px;font-size:8.5px;color:#e4e4e4">Search</div>
<svg style="left:491px;top:552px" width="17" height="15" viewBox="0 0 17 15"><rect x="0" y="4.5" width="10.5" height="10" rx="1" fill="#6e6e6e"/><rect x="5.5" y="0" width="11" height="10.5" rx="1" fill="#f2f2f2"/></svg>
<svg style="left:520px;top:551.5px" width="17" height="17" viewBox="0 0 17 17"><defs><linearGradient id="ed" x1="0.8" y1="0.1" x2="0.2" y2="0.9"><stop offset="0" stop-color="#5ee0a0"/><stop offset="0.35" stop-color="#2fb4e8"/><stop offset="1" stop-color="#0b5bb0"/></linearGradient></defs><circle cx="8.5" cy="8.5" r="8" fill="url(#ed)"/><path d="M5.2 9.8 Q5.6 6.2 9.3 6.4 Q12.3 6.7 12.2 9.2 Q12.1 10.6 10.2 10.6 Q7.8 10.6 7.8 12.5 Q7.9 14.6 11.5 15.2 Q7.5 16.8 5.2 13.5 Q4.3 12 5.2 9.8Z" fill="#1c1c1c"/></svg>
<svg style="left:549.5px;top:552px" width="17" height="16" viewBox="0 0 17 16"><defs><linearGradient id="cp1" x1="0" y1="0" x2="1" y2="1"><stop offset="0" stop-color="#1f9bf0"/><stop offset="1" stop-color="#8a5cf0"/></linearGradient><linearGradient id="cp2" x1="0" y1="0" x2="1" y2="1"><stop offset="0" stop-color="#e45ad8"/><stop offset="1" stop-color="#f7a040"/></linearGradient></defs><path d="M5.5 0.8 H10.5 Q12 0.8 11.5 2.5 L8.5 12 Q8 13.5 6.5 13.5 H2 Q0.5 13.5 1 12 L4 2.5 Q4.5 0.8 5.5 0.8Z" fill="url(#cp1)"/><path d="M10.5 2.5 H15 Q16.5 2.5 16 4 L13 13.5 Q12.5 15.2 11 15.2 H6.5 Q5 15.2 5.5 13.5 L8.5 4 Q9 2.5 10.5 2.5Z" fill="url(#cp2)" opacity="0.92"/></svg>
<svg style="left:578px;top:552px" width="18" height="16" viewBox="0 0 18 16"><path d="M0 1.5 Q0 0.5 1 0.5 H6.5 L8.5 2.5 H17 Q18 2.5 18 3.5 V15 Q18 16 17 16 H1 Q0 16 0 15Z" fill="#f9c846"/><rect x="0" y="5" width="18" height="11" rx="1" fill="#ffd75e"/><rect x="5" y="10" width="8" height="4" fill="#1b79d8"/></svg>
<div class="a" style="left:585px;top:571px;width:5px;height:1.5px;background:#9a9a9a;border-radius:1px"></div>
<svg style="left:607px;top:548px" width="22" height="21" viewBox="0 0 22 21"><circle cx="15" cy="5.5" r="5" fill="#d6a0e8"/><circle cx="8" cy="6" r="2.5" fill="#7b83eb"/><path d="M4 9 H13 V16 Q13 20 9 20 Q4 20 4 16Z" fill="#7b83eb"/><rect x="1" y="10.5" width="8" height="8" rx="1" fill="#4b53bc"/><path d="M3 12.5 H7 M5 12.5 V17" stroke="#fff" stroke-width="1.3"/></svg>
<div class="t" style="left:619.3px;top:549px;font-size:7.5px;color:#3a1a4a">3</div>
<div class="a" style="left:614px;top:571px;width:5px;height:1.5px;background:#9a9a9a;border-radius:1px"></div>
<div class="a" style="left:632.5px;top:547px;width:26.5px;height:26px;background:#2b2b2b;border-radius:4px"></div>
<svg style="left:637px;top:552px" width="22" height="18" viewBox="0 0 22 18"><circle cx="8.5" cy="9" r="7.8" fill="#db4437"/><path d="M8.5 9 L1.7 5.1 A7.8 7.8 0 0 0 5 16 Z" fill="#0f9d58"/><path d="M8.5 9 L5 16 A7.8 7.8 0 0 0 16.3 9.2 Z" fill="#ffcd40"/><circle cx="8.5" cy="9" r="3.6" fill="#fff"/><circle cx="8.5" cy="9" r="2.8" fill="#4285f4"/><circle cx="14.5" cy="1.2" r="4.8" fill="#2b6e2a"/></svg>
<div class="t" style="left:648.8px;top:550.3px;font-size:6.5px;color:#d8f0d8">M</div>
<div class="a" style="left:640px;top:570.5px;width:11.5px;height:2.5px;background:#e7a9ee;border-radius:1.5px"></div>
<svg style="left:667px;top:553px" width="16" height="14" viewBox="0 0 16 14"><rect x="0" y="0" width="16" height="14" rx="1" fill="#3b3b3b"/><rect x="0" y="0" width="16" height="2.5" fill="#8a8a8a"/><path d="M3 5.5 L6 8 L3 10.5" stroke="#f0f0f0" stroke-width="1.3" fill="none"/><path d="M7.5 11 H12" stroke="#f0f0f0" stroke-width="1.2"/></svg>
<div class="a" style="left:672.5px;top:571px;width:5px;height:1.5px;background:#9a9a9a;border-radius:1px"></div>
<svg style="left:697.5px;top:551.5px" width="13" height="17" viewBox="0 0 13 17"><rect x="0" y="1.5" width="13" height="15.5" rx="1" fill="#3cb6d8"/><path d="M2.5 0.5 V2.5 M5 0.5 V2.5 M7.5 0.5 V2.5 M10 0.5 V2.5" stroke="#cfe" stroke-width="0.9"/><path d="M2.5 6 H10.5 M2.5 9 H10.5 M2.5 12 H10.5" stroke="#1a6a86" stroke-width="1"/></svg>
<div class="a" style="left:702px;top:571px;width:5px;height:1.5px;background:#9a9a9a;border-radius:1px"></div>
<svg style="left:850px;top:557px" width="10" height="6" viewBox="0 0 10 6"><path d="M1 5 L5 1 L9 5" stroke="#f0f0f0" stroke-width="1.3" fill="none"/></svg>
<div class="t" style="left:872.5px;top:552px;font-size:7.4px;color:#f0f0f0">ENG</div>
<div class="t" style="left:876.5px;top:562.2px;font-size:7.4px;color:#f0f0f0">IN</div>
<svg style="left:899px;top:555px" width="13" height="10" viewBox="0 0 13 10"><path d="M1 3.5 Q6.5 -1.5 12 3.5 M2.8 5.5 Q6.5 2 10.2 5.5 M4.6 7.4 Q6.5 5.7 8.4 7.4" stroke="#f0f0f0" stroke-width="1.2" fill="none"/><circle cx="6.5" cy="9" r="0.9" fill="#f0f0f0"/></svg>
<svg style="left:915px;top:554.5px" width="13" height="11" viewBox="0 0 13 11"><path d="M1 3.5 H3.5 L6.5 1 V10 L3.5 7.5 H1Z" stroke="#f0f0f0" stroke-width="1.1" fill="none"/><path d="M8.5 3.5 Q9.8 5.5 8.5 7.5 M10.3 2 Q12.5 5.5 10.3 9" stroke="#8a8a8a" stroke-width="1" fill="none"/></svg>
<svg style="left:931px;top:553.5px" width="13" height="12" viewBox="0 0 13 12"><path d="M5.5 1 L2 9 H6Z" fill="#f0f0f0"/><path d="M6 3 A4.5 4.5 0 1 1 5 10.5" stroke="#f0f0f0" stroke-width="1.2" fill="none"/><path d="M1 10 H9" stroke="#f0f0f0" stroke-width="1.2"/></svg>
<div class="t" style="left:935px;width:60px;text-align:right;top:552px;font-size:7.8px;color:#f0f0f0">11:42</div>
<div class="t" style="left:935px;width:60px;text-align:right;top:562px;font-size:8px;color:#f0f0f0">12-12-2025</div>
<svg style="left:1001px;top:553.5px" width="12" height="13" viewBox="0 0 12 13"><path d="M6 1 Q10 1 10 5 V8.5 L11.5 10 H0.5 L2 8.5 V5 Q2 1 6 1Z" fill="#f0f0f0"/><circle cx="6" cy="11.5" r="1.3" fill="#f0f0f0"/><path d="M6 4 H9 M6 6 H9" stroke="#1c1c1c" stroke-width="0.8"/></svg>
</body></html>
